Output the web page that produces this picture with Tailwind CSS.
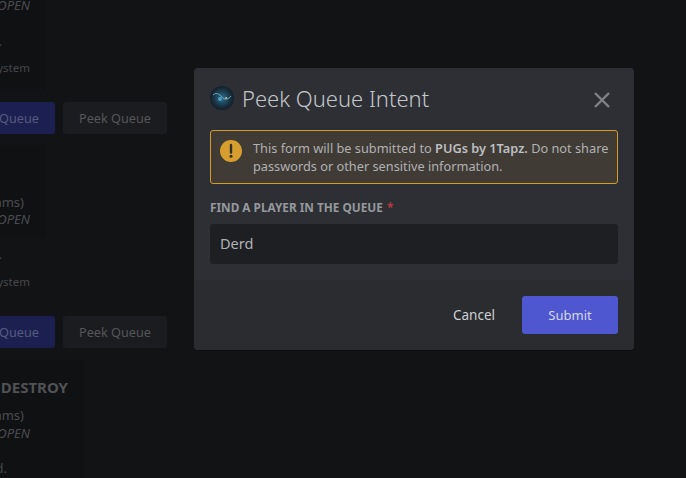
<!DOCTYPE html>
<html lang="en">
<head>
  <meta charset="UTF-8">
  <meta name="viewport" content="width=device-width, initial-scale=1.0">
  <title>Peek Queue Intent</title>
  <script src="https://cdn.jsdelivr.net/npm/@tailwindcss/browser@4"></script>
</head>
<body class="relative w-[686px] h-[478px] overflow-hidden bg-[#121315] font-['Noto_Sans',sans-serif]">

  <!-- channel behind the dimmed layer -->
  <div class="flex flex-col -ml-[100px] w-[267px] h-[478px] overflow-hidden text-[13px] text-[#46474a]">
    <div class="w-[146px] h-[93px] bg-[#101113] rounded-[3px] -mt-[4px] shrink-0">
      <p class="w-[130px] h-[18px] leading-[18px] text-right italic text-[#4b4c4f]">Status: OPEN</p>
      <p class="w-[102px] h-[18px] leading-[18px] mt-[18px] text-right">.</p>
      <p class="w-[130px] h-[18px] leading-[18px] mt-[9px] text-[11.5px] text-right">Queue system</p>
    </div>
    <div class="flex gap-2 mt-[13px] shrink-0">
      <button class="w-[155px] h-[32px] rounded-[3px] bg-[#1c2050] pr-[16px] pt-[1px] text-right text-[12.7px] text-[#565a80]">Join Queue</button>
      <button class="w-[104px] h-[32px] rounded-[3px] bg-[#1b1c1f] pt-[1px] text-center text-[12.7px] text-[#55565a]">Peek Queue</button>
    </div>
    <div class="w-[146px] h-[92px] bg-[#101113] rounded-[3px] mt-[11px] shrink-0 pt-[48px]">
      <p class="w-[124px] h-[18px] leading-[18px] text-right text-[#4b4c4f]">(5 teams)</p>
      <p class="w-[130px] h-[18px] leading-[18px] -mt-[1px] text-right italic text-[#4b4c4f]">Status: OPEN</p>
    </div>
    <div class="w-[146px] h-[72px] shrink-0 -mt-[1px]">
      <p class="w-[102px] h-[18px] leading-[18px] mt-[9px] text-right">.</p>
      <p class="w-[130px] h-[18px] leading-[18px] mt-[10px] text-[11.5px] text-right">Queue system</p>
    </div>
    <div class="flex gap-2 mt-[8px] shrink-0">
      <button class="w-[155px] h-[32px] rounded-[3px] bg-[#1c2050] pr-[16px] pt-[1px] text-right text-[12.7px] text-[#565a80]">Join Queue</button>
      <button class="w-[104px] h-[32px] rounded-[3px] bg-[#1b1c1f] pt-[1px] text-center text-[12.7px] text-[#55565a]">Peek Queue</button>
    </div>
    <div class="w-[184px] grow bg-[#101113] mt-[12px] pt-[18px]">
      <p class="w-[168px] h-[18px] leading-[18px] text-right text-[15px] font-bold text-[#515255]">SEARCH AND DESTROY</p>
      <p class="w-[124px] h-[18px] leading-[18px] mt-[10px] text-right text-[#4b4c4f]">(5 teams)</p>
      <p class="w-[130px] h-[18px] leading-[18px] text-right italic text-[#4b4c4f]">Status: OPEN</p>
      <p class="w-[107px] h-[18px] leading-[18px] mt-[17px] text-right">Started.</p>
    </div>
  </div>

  <!-- modal -->
  <div class="absolute left-[194px] top-[68px] w-[440px] h-[282px] rounded-[4px] overflow-hidden flex flex-col bg-[#2d2f34] text-[#b5b7bc] shadow-[0_1px_0_#0c0d0e]">
    <div class="flex items-center pl-4 pr-[4px] pb-[2px] h-[62px] shrink-0">
      <svg class="w-6 h-6 shrink-0" viewBox="0 0 24 24">
        <defs>
          <radialGradient id="orb" cx="50%" cy="50%" r="55%">
            <stop offset="0%" stop-color="#2f6f92"/>
            <stop offset="55%" stop-color="#1b3a4c"/>
            <stop offset="100%" stop-color="#11181e"/>
          </radialGradient>
        </defs>
        <circle cx="12" cy="12" r="12" fill="url(#orb)"/>
        <path d="M3 9c4-4 8 1 10 3s6 1 8-2" stroke="#6fa8bd" stroke-width="1" fill="none"/>
        <circle cx="10" cy="13" r="2" fill="#4d9ec4"/>
        <circle cx="16" cy="12" r="1" fill="#c9b98c"/>
      </svg>
      <h1 class="ml-2 text-[22px] leading-[28px] font-light text-[#c4c6ca]">Peek Queue Intent</h1>
      <svg class="w-6 h-6 ml-auto mr-[16px] mt-[4px] shrink-0 text-[#7f8186]" viewBox="0 0 24 24" fill="none" stroke="currentColor" stroke-width="2.4">
        <path d="M5 5l14 14M19 5L5 19"/>
      </svg>
    </div>

    <div class="mx-4 h-[54px] shrink-0 flex items-start rounded-[3px] border border-[#d49d2b] bg-[#403b35]">
      <svg class="w-[22px] h-[22px] ml-[9px] mt-[9px] shrink-0" viewBox="0 0 22 22">
        <circle cx="11" cy="11" r="11" fill="#d69e2e"/>
        <path d="M11 5v7.5" stroke="#33302c" stroke-width="2.4" stroke-linecap="round"/>
        <circle cx="11" cy="16.3" r="1.5" fill="#33302c"/>
      </svg>
      <p class="ml-[11px] mt-[8px] text-[12.75px] leading-[18px] text-[#b0b1b4]">This form will be submitted to <b class="font-semibold text-[#bebfc2]">PUGs by 1Tapz.</b> Do not share passwords or other sensitive information.</p>
    </div>

    <label class="mx-4 mt-[15px] h-[16px] shrink-0 text-[11.8px] leading-[16px] font-bold text-[#96989d]">FIND A PLAYER IN THE QUEUE <span class="ml-[1px] text-[#b23a3e]">*</span></label>
    <div class="mx-4 mt-[9px] h-[40px] shrink-0 flex items-center px-[10px] rounded-[3px] bg-[#1e1f22] text-[14.5px] text-[#b0b2b6]">Derd</div>

    <div class="mt-auto h-[70px] shrink-0 flex items-center justify-end gap-[11px] px-4 bg-[#2a2c30]">
      <button class="px-4 h-[38px] pt-[1px] text-[13.5px] text-[#cfd0d3]">Cancel</button>
      <button class="w-[96px] h-[38px] rounded-[3px] bg-[#4e57cf] pt-[1px] text-[13px] text-[#d5d7f3]">Submit</button>
    </div>
  </div>
</body>
</html>
